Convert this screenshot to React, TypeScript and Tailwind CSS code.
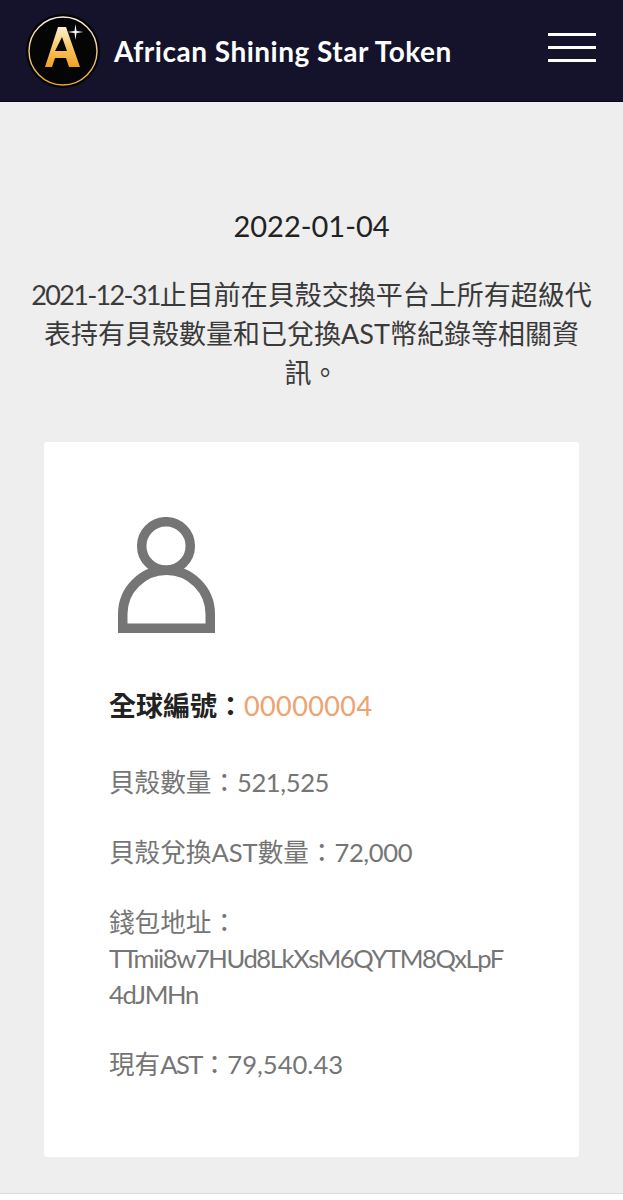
const fontStack = 'font-["Lato","Noto_Sans_CJK_TC",sans-serif]';

function Logo() {
  return (
    <svg viewBox="0 0 76 76" className="h-[76px] w-[76px] shrink-0">
      <defs>
        <linearGradient id="gold" x1="0" y1="0" x2="0" y2="1">
          <stop offset="0" stopColor="#fdf0d0" />
          <stop offset="0.55" stopColor="#f9c35c" />
          <stop offset="1" stopColor="#f0a024" />
        </linearGradient>
        <linearGradient id="ring" x1="0" y1="0" x2="0" y2="1">
          <stop offset="0" stopColor="#f6efe2" />
          <stop offset="1" stopColor="#eda53a" />
        </linearGradient>
      </defs>
      <circle cx="38" cy="38" r="37" fill="#050505" />
      <circle cx="38" cy="38" r="34" fill="none" stroke="url(#ring)" strokeWidth="1.4" />
      <path
        fill="url(#gold)"
        fillRule="evenodd"
        d="M33 14H41L55 54H44L41 45H30L27 54H20ZM37 24L30 38H42Z"
      />
      <path fill="#fff" d="M50.500 11l1 7 7 1-7 1-1 7-1-7-7-1 7-1Z" />
    </svg>
  );
}

function Row({ children }: { children: React.ReactNode }) {
  return <p className="text-[25.6px] leading-[36px] text-[#757575]">{children}</p>;
}

export default function App() {
  return (
    <div className={`min-h-[1200px] bg-[#eeeeee] ${fontStack}`}>
      <header className="flex h-[102px] items-center justify-between border-b border-[#0a0a14] bg-[#14132b] pl-[25px] pr-[27px]">
        <div className="flex items-center gap-[13px]">
          <Logo />
          <span className="text-[28px] font-bold tracking-[0.5px] text-white">African Shining Star Token</span>
        </div>
        <div className="mb-[6px] flex w-[48px] flex-col gap-[10px]">
          <span className="h-[3px] bg-white" />
          <span className="h-[3px] bg-white" />
          <span className="h-[3px] bg-white" />
        </div>
      </header>

      <main className="flex flex-col items-center px-[28px] pt-[105px]">
        <h1 className="text-[29px] leading-[38px] text-[#222222]">2022-01-04</h1>
        <p className="mt-[30px] text-center text-[27px] leading-[39px] text-[#3a3a3a]">
          <span className="tracking-[-1.7px]">2021-12-31</span>止目前在貝殼交換平台上所有超級代表持有貝殼數量和已兌換AST幣紀錄等相關資訊。
        </p>
      </main>

      <section className="mx-[44px] mt-[50px] flex h-[715px] flex-col rounded-[3px] bg-white pl-[65px] pr-[60px] pt-[75px]">
        <svg viewBox="0 0 97 116" className="ml-[9px] h-[116px] w-[97px]">
          <circle cx="48" cy="29" r="24.300" fill="none" stroke="#757575" strokeWidth="9.500" />
          <path d="M4.750 111.250V97A43.750 43.750 0 0 1 92.250 97V111.250Z" fill="none" stroke="#757575" strokeWidth="9.500" />
        </svg>
        <p className="mt-[55px] text-[27px] leading-[36px] font-bold text-[#222222]">
          全球編號：<span className="font-normal tracking-[0.4px] text-[#eea26f]">00000004</span>
        </p>
        <div className="mt-[40px] flex flex-col gap-[34px]">
          <Row>
            貝殼數量：<span className="tracking-[-0.4px]">521,525</span>
          </Row>
          <Row>
            貝殼兌換AST數量：<span className="tracking-[-0.4px]">72,000</span>
          </Row>
          <Row>
            錢包地址：
            <br />
            <span className="tracking-[-1.4px]">
              TTmii8w7HUd8LkXsM6QYTM8QxLpF
              <br />
              4dJMHn
            </span>
          </Row>
          <Row>
            現有<span className="tracking-[-1.6px]">AST</span>：79,540.43
          </Row>
        </div>
      </section>

      <footer className="mt-[36px] h-[7px] border-t border-[#dddddd] bg-white" />
    </div>
  );
}
